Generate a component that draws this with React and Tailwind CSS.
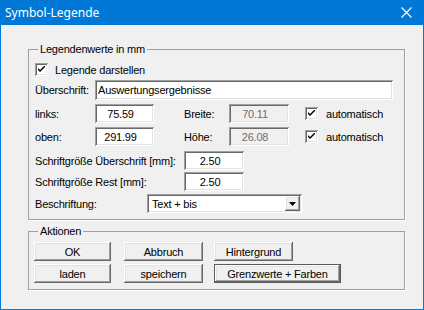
import React from "react";

const font = { fontFamily: '"Liberation Sans", Arial, sans-serif' };

// sunken / raised 3d frames like the old Win32 controls
const sunken =
  "shadow-[inset_1px_1px_0_#a0a0a0,inset_-1px_-1px_0_#ffffff,inset_2px_2px_0_#696969,inset_-2px_-2px_0_#e3e3e3]";
const raised =
  "shadow-[inset_-1px_-1px_0_#696969,inset_1px_1px_0_#ffffff,inset_-2px_-2px_0_#a0a0a0,inset_2px_2px_0_#e3e3e3]";

function Check() {
  return (
    <span className={`flex h-[13px] w-[13px] shrink-0 items-center justify-center bg-white ${sunken}`}>
      <svg width="7" height="7" viewBox="0 0 7 7">
        <path d="M0 2 L0 4 L2 6 L7 1 L7 -1 L2 4 Z" fill="#000" />
      </svg>
    </span>
  );
}

function Field({ value, w, disabled }) {
  return (
    <div
      className={`flex h-[19px] shrink-0 items-center justify-center pr-[8px] ${sunken} ${
        disabled ? "bg-[#f0f0f0] text-[#6d6d6d]" : "bg-white text-black"
      }`}
      style={{ width: w }}
    >
      {value}
    </div>
  );
}

function Btn({ children, w, primary }) {
  return (
    <div
      className={`flex h-[19px] shrink-0 items-center justify-center bg-[#f0f0f0] ${
        primary ? "border border-[#5a5a5a]" : ""
      } ${raised}`}
      style={{ width: w }}
    >
      {children}
    </div>
  );
}

function Group({ label, className, children }) {
  return (
    <div className={`relative border border-[#a0a0a0] shadow-[1px_1px_0_#ffffff] ${className}`}>
      <span className="absolute -top-[8px] left-[9px] bg-[#f0f0f0] px-[2px] leading-[14px]">{label}</span>
      {children}
    </div>
  );
}

export default function App() {
  return (
    <div
      className="flex h-[310px] w-[424px] flex-col whitespace-nowrap bg-[#0078d7] text-[11px] leading-[14px] tracking-[-0.2px] text-black"
      style={font}
    >
      <div className="flex h-[25px] shrink-0 items-center justify-between pl-[5px] pr-[12px] tracking-normal text-white">
        <span className="text-[12px]" style={{ fontFamily: '"Noto Sans", "Open Sans", sans-serif' }}>
          Symbol-Legende
        </span>
        <svg width="11" height="11" viewBox="0 0 11 11">
          <path d="M0.5 0.5 L10.5 10.5 M10.5 0.5 L0.5 10.5" stroke="#fff" strokeWidth="1.1" />
        </svg>
      </div>

      <div className="mx-[1px] mb-[1px] flex flex-1 flex-col bg-[#f0f0f0] pl-[27px] pt-[24px]">
        <Group label="Legendenwerte in mm" className="h-[171px] w-[377px]">
          <div className="flex flex-col pl-[6px]">
            <div className="mt-[13px] flex h-[13px] items-center">
              <Check />
              <span className="ml-[7px]">Legende darstellen</span>
            </div>

            <div className="mt-[4px] flex h-[20px] items-center">
              <span className="w-[60px]">Überschrift:</span>
              <div className={`flex h-[20px] w-[298px] items-center bg-white pl-[3px] ${sunken}`}>
                Auswertungsergebnisse
              </div>
            </div>

            <div className="mt-[4px] flex h-[19px] items-center">
              <span className="w-[60px]">links:</span>
              <Field value="75.59" w={59} />
              <span className="ml-[30px] w-[45px]">Breite:</span>
              <Field value="70.11" w={60} disabled />
              <span className="ml-[16px]">
                <Check />
              </span>
              <span className="ml-[8px]">automatisch</span>
            </div>

            <div className="mt-[4px] flex h-[19px] items-center">
              <span className="w-[60px]">oben:</span>
              <Field value="291.99" w={59} />
              <span className="ml-[30px] w-[45px]">Höhe:</span>
              <Field value="26.08" w={60} disabled />
              <span className="ml-[16px]">
                <Check />
              </span>
              <span className="ml-[8px]">automatisch</span>
            </div>

            <div className="mt-[5px] flex h-[19px] items-center">
              <span className="w-[149px]">Schriftgröße Überschrift [mm]:</span>
              <Field value="2.50" w={60} />
            </div>

            <div className="mt-[2px] flex h-[19px] items-center">
              <span className="w-[149px]">Schriftgröße Rest [mm]:</span>
              <Field value="2.50" w={60} />
            </div>

            <div className="mt-[3px] flex h-[19px] items-center">
              <span className="w-[112px]">Beschriftung:</span>
              <div className={`flex h-[19px] w-[155px] items-center justify-between bg-white pl-[5px] pr-[2px] ${sunken}`}>
                <span>Text + bis</span>
                <div className={`flex h-[15px] w-[15px] items-center justify-center bg-[#f0f0f0] ${raised}`}>
                  <svg width="7" height="4" viewBox="0 0 7 4">
                    <path d="M0 0 H7 L3.5 4 Z" fill="#000" />
                  </svg>
                </div>
              </div>
            </div>
          </div>
        </Group>

        <Group label="Aktionen" className="mt-[11px] h-[59px] w-[377px]">
          <div className="flex flex-col gap-[3px] pl-[5px] pt-[10px]">
            <div className="flex items-center">
              <Btn w={77}>OK</Btn>
              <span className="ml-[13px]">
                <Btn w={79}>Abbruch</Btn>
              </span>
              <span className="ml-[11px]">
                <Btn w={79}>Hintergrund</Btn>
              </span>
            </div>
            <div className="flex items-center">
              <Btn w={77}>laden</Btn>
              <span className="ml-[13px]">
                <Btn w={79}>speichern</Btn>
              </span>
              <span className="ml-[11px]">
                <Btn w={127} primary>
                  Grenzwerte + Farben
                </Btn>
              </span>
            </div>
          </div>
        </Group>
      </div>
    </div>
  );
}
